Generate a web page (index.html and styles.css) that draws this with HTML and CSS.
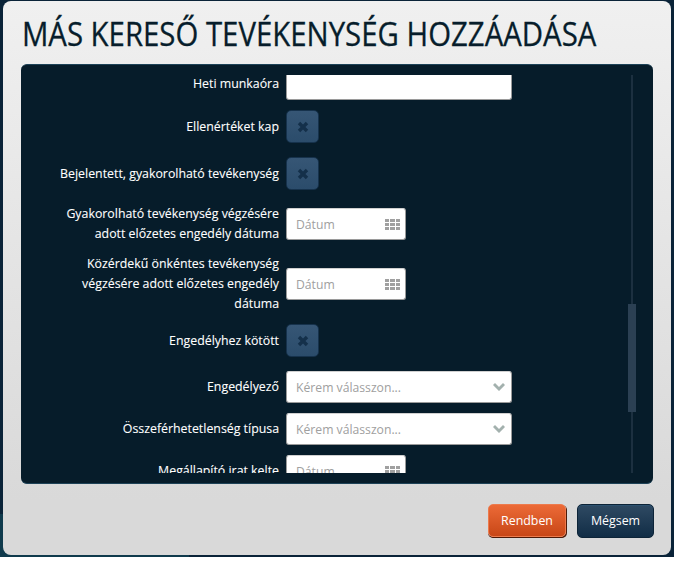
FILE: index.html
```html
<!DOCTYPE html>
<html lang="hu">
<head>
<meta charset="utf-8">
<title>Más kereső tevékenység hozzáadása</title>
<link rel="stylesheet" href="styles.css">
</head>
<body>
<div class="backdrop">
<div class="modal">
  <h1 class="title">MÁS KERESŐ TEVÉKENYSÉG HOZZÁADÁSA</h1>
  <div class="panel">
    <div class="scroller">
      <form class="form">
        <div class="row"><label class="lbl">Heti munkaóra</label><div class="input wide"></div></div>
        <div class="row toggle-row"><label class="lbl">Ellenértéket kap</label><button type="button" class="toggle"><svg viewBox="0 0 12 12" class="x"><path d="M0.8 3.2 3.2 0.8 6 3.6 8.8 0.8 11.2 3.2 8.4 6 11.2 8.8 8.8 11.2 6 8.4 3.2 11.2 0.8 8.8 3.6 6Z"/></svg></button></div>
        <div class="row toggle-row"><label class="lbl">Bejelentett, gyakorolható tevékenység</label><button type="button" class="toggle"><svg viewBox="0 0 12 12" class="x"><path d="M0.8 3.2 3.2 0.8 6 3.6 8.8 0.8 11.2 3.2 8.4 6 11.2 8.8 8.8 11.2 6 8.4 3.2 11.2 0.8 8.8 3.6 6Z"/></svg></button></div>
        <div class="row"><label class="lbl">Gyakorolható tevékenység végzésére adott előzetes engedély dátuma</label><div class="input date"><span class="ph">Dátum</span><svg class="cal" viewBox="0 0 15 11"><path d="M0 0h4v3H0zM5 0h5v3H5zM11 0h4v3h-4zM0 4h4v3H0zM5 4h5v3H5zM11 4h4v3h-4zM0 8h4v3H0zM5 8h5v3H5zM11 8h4v3h-4z"/></svg></div></div>
        <div class="row"><label class="lbl">Közérdekű önkéntes tevékenység végzésére adott előzetes engedély dátuma</label><div class="input date"><span class="ph">Dátum</span><svg class="cal" viewBox="0 0 15 11"><path d="M0 0h4v3H0zM5 0h5v3H5zM11 0h4v3h-4zM0 4h4v3H0zM5 4h5v3H5zM11 4h4v3h-4zM0 8h4v3H0zM5 8h5v3H5zM11 8h4v3h-4z"/></svg></div></div>
        <div class="row toggle-row"><label class="lbl">Engedélyhez kötött</label><button type="button" class="toggle"><svg viewBox="0 0 12 12" class="x"><path d="M0.8 3.2 3.2 0.8 6 3.6 8.8 0.8 11.2 3.2 8.4 6 11.2 8.8 8.8 11.2 6 8.4 3.2 11.2 0.8 8.8 3.6 6Z"/></svg></button></div>
        <div class="row"><label class="lbl">Engedélyező</label><div class="input wide select"><span class="ph">Kérem válasszon...</span><svg class="chev" viewBox="0 0 12 8"><path d="M0 2 2 0 6 4 10 0 12 2 6 8Z"/></svg></div></div>
        <div class="row"><label class="lbl">Összeférhetetlenség típusa</label><div class="input wide select"><span class="ph">Kérem válasszon...</span><svg class="chev" viewBox="0 0 12 8"><path d="M0 2 2 0 6 4 10 0 12 2 6 8Z"/></svg></div></div>
        <div class="row"><label class="lbl">Megállapító irat kelte</label><div class="input date"><span class="ph">Dátum</span><svg class="cal" viewBox="0 0 15 11"><path d="M0 0h4v3H0zM5 0h5v3H5zM11 0h4v3h-4zM0 4h4v3H0zM5 4h5v3H5zM11 4h4v3h-4zM0 8h4v3H0zM5 8h5v3H5zM11 8h4v3h-4z"/></svg></div></div>
      </form>
    </div>
    <div class="track"><div class="thumb"></div></div>
  </div>
  <div class="actions">
    <button type="button" class="btn ok">Rendben</button>
    <button type="button" class="btn cancel">Mégsem</button>
  </div>
</div>
</div>
</body>
</html>
```

FILE: styles.css
```css
* { box-sizing: border-box; }
html, body { margin: 0; height: 100%; background: #fff; }
body {
  width: 674px;
  height: 561px;
  overflow: hidden;
  font-family: "Open Sans", sans-serif;
}
.backdrop {
  width: 674px;
  height: 557px;
  padding: 1px 3px 0 3px;
  background-color: #0a2338;
  background-image: linear-gradient(#0f3a4c, #0f3a4c);
  background-repeat: no-repeat;
  background-size: 189px 43px;
  background-position: 0 514px;
}
.modal {
  width: 668px;
  height: 554px;
  border-radius: 8px;
  background: linear-gradient(#f0f0f0, #d9d9d9 90%);
  padding: 0 18px 0 18px;
  display: flex;
  flex-direction: column;
}
.title {
  margin: 0;
  height: 63px;
  padding: 14px 0 0 1px;
  font-size: 33px;
  line-height: 38px;
  font-weight: 400;
  color: #071d2b;
  white-space: nowrap;
  transform: scaleX(0.89);
  transform-origin: left center;
  -webkit-text-stroke: 0.3px #071d2b;
}
.panel {
  width: 632px;
  height: 420px;
  background: #061c2a;
  border-radius: 6px;
  border-bottom: 1px solid #1d4257;
  border-top: 1px solid #1d4257;
  padding-top: 10px;
  display: flex;
  position: relative;
}
.scroller {
  width: 600px;
  height: 398px;
  overflow: hidden;
}
.form {
  margin-top: -7px;
  display: flex;
  flex-direction: column;
  gap: 10px;
}
.row {
  display: flex;
  align-items: center;
  gap: 7px;
}
.toggle-row { margin-bottom: 4px; }
.lbl {
  width: 258px;
  padding-left: 30px;
  flex: none;
  text-align: right;
  color: #fff;
  font-size: 12.35px;
  line-height: 20px;
  -webkit-text-stroke: 0.1px #fff;
}
.input {
  flex: none;
  height: 32px;
  background: #fff;
  border-radius: 3px;
  border: 1px solid #9a9a9a;
  border-top-color: #d0d0d0;
  display: flex;
  align-items: center;
  justify-content: space-between;
  padding: 0 10px 0 9px;
}
.wide { width: 226px; }
.date { width: 120px; padding-right: 5px; }
.select { padding-right: 6px; }
.ph { color: #a0a0a0; font-size: 12.2px; }
.cal { width: 15px; height: 11px; fill: #a0a0a0; }
.chev { width: 12px; height: 8px; fill: #a3b1ae; }
.toggle {
  width: 33px;
  height: 33px;
  padding: 0;
  border-radius: 5px;
  border: 1px solid #16324c;
  background: linear-gradient(#365675, #2b4c6b);
  display: flex;
  align-items: center;
  justify-content: center;
}
.x { width: 12px; height: 12px; fill: #14304a; }
.track {
  position: absolute;
  left: 610px;
  top: 10px;
  width: 2px;
  height: 398px;
  background: #1c3040;
}
.thumb {
  position: absolute;
  left: -3px;
  top: 229px;
  width: 8px;
  height: 108px;
  background: #2b4053;
}
.actions {
  display: flex;
  justify-content: flex-end;
  gap: 11px;
  margin-top: 20px;
  margin-right: -1px;
}
.btn {
  height: 33px;
  border-radius: 5px;
  color: #fff;
  font: 400 12.4px/1 "Open Sans", sans-serif;
  padding: 1px 0 0;
}
.ok {
  width: 78px;
  border: 1px solid #ed7a4c;
  box-shadow: 1px 1px 0 #4d1a08, 0 1px 0 #4d1a08;
  background: linear-gradient(#ec6a37, #c84717);
}
.cancel {
  width: 77px;
  height: 34px;
  border: 1px solid #0d2438;
  box-shadow: inset 0 1px 0 #2d5270;
  background: linear-gradient(#2f4a63, #112d46);
}
```
